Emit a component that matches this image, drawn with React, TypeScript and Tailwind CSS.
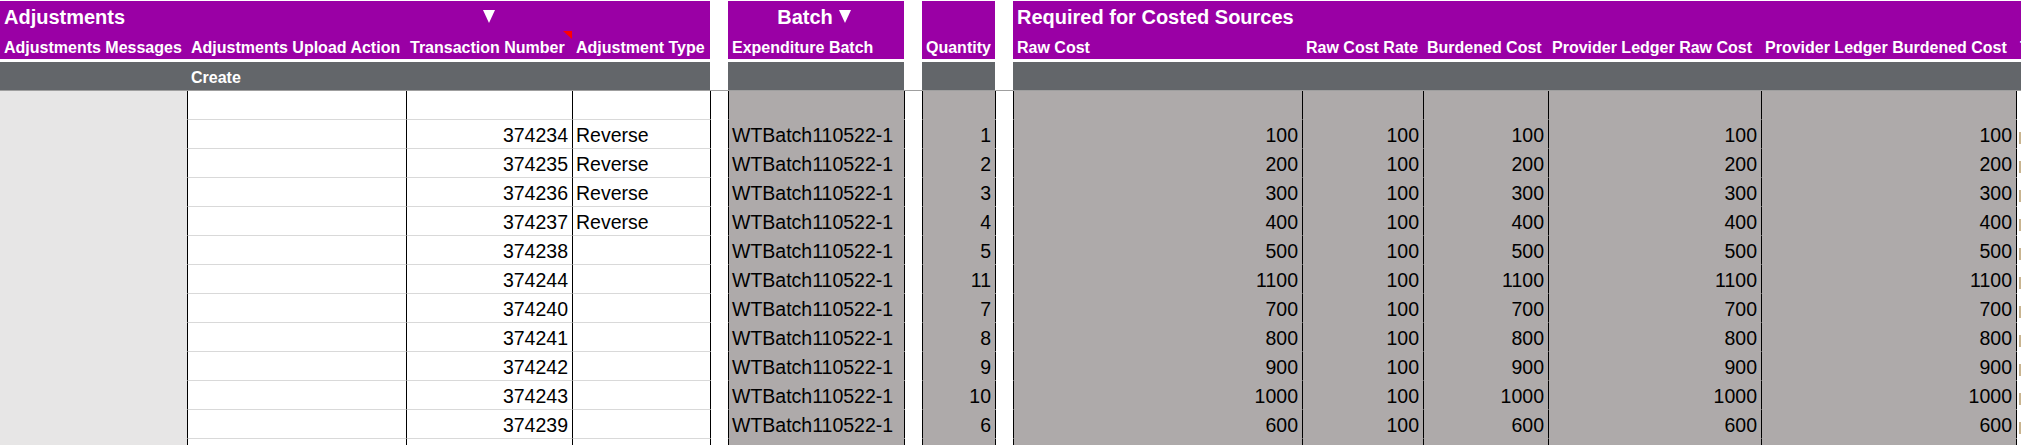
import React from "react";

const GRID =
  "grid grid-cols-[187px_219px_166px_138px_18px_176px_18px_73px_18px_289px_121px_125px_213px_255px_minmax(0,1fr)]";

const PURPLE = "bg-[#9a00a5]";
const BAR = "bg-[#63666a]";
const CELLGRAY = "bg-[#aeaaaa]";

type Row = { tx: string; type: string; qty: string; cost: string };

const rows: Row[] = [
  { tx: "374234", type: "Reverse", qty: "1", cost: "100" },
  { tx: "374235", type: "Reverse", qty: "2", cost: "200" },
  { tx: "374236", type: "Reverse", qty: "3", cost: "300" },
  { tx: "374237", type: "Reverse", qty: "4", cost: "400" },
  { tx: "374238", type: "", qty: "5", cost: "500" },
  { tx: "374244", type: "", qty: "11", cost: "1100" },
  { tx: "374240", type: "", qty: "7", cost: "700" },
  { tx: "374241", type: "", qty: "8", cost: "800" },
  { tx: "374242", type: "", qty: "9", cost: "900" },
  { tx: "374243", type: "", qty: "10", cost: "1000" },
  { tx: "374239", type: "", qty: "6", cost: "600" },
];

function Tri({ className = "" }: { className?: string }) {
  return (
    <svg width="12" height="13" viewBox="0 0 12 13" className={className}>
      <polygon points="0,0 12,0 6,13" fill="#ffffff" />
    </svg>
  );
}

const h2 =
  "h-[28px] flex items-end pb-[2px] pl-[4px] leading-[18px] text-[16px] font-bold text-white whitespace-nowrap overflow-hidden";

const dataBase =
  "h-[29px] flex items-end pb-[3px] leading-[20px] text-[19.5px] text-black whitespace-nowrap overflow-hidden border-b";

function DataRow({ r }: { r?: Row }) {
  return (
    <>
      <div className="h-[29px] bg-[#e7e6e6]" />
      <div className={`${dataBase} bg-white border-l border-l-black border-b-[#d9d9d9]`} />
      <div className={`${dataBase} bg-white border-l border-l-black border-b-[#d9d9d9] justify-end pr-[4px]`}>
        {r?.tx}
      </div>
      <div className={`${dataBase} bg-white border-l border-l-black border-b-[#d9d9d9] pl-[3px]`}>
        {r?.type}
      </div>
      <div className={`${dataBase} bg-white border-l border-l-black border-b-white`} />
      <div className={`${dataBase} ${CELLGRAY} border-l border-l-black border-b-[#aeaaaa] pl-[3px]`}>
        {r ? "WTBatch110522-1" : ""}
      </div>
      <div className={`${dataBase} bg-white border-l border-l-black border-b-white`} />
      <div className={`${dataBase} ${CELLGRAY} border-l border-l-black border-b-[#aeaaaa] justify-end pr-[4px]`}>
        {r?.qty}
      </div>
      <div className={`${dataBase} bg-white border-l border-l-black border-b-white`} />
      <div className={`${dataBase} ${CELLGRAY} border-l border-l-black border-b-[#aeaaaa] justify-end pr-[4px]`}>
        {r?.cost}
      </div>
      <div className={`${dataBase} ${CELLGRAY} border-l border-l-black border-b-[#aeaaaa] justify-end pr-[4px]`}>
        {r ? "100" : ""}
      </div>
      <div className={`${dataBase} ${CELLGRAY} border-l border-l-black border-b-[#aeaaaa] justify-end pr-[4px]`}>
        {r?.cost}
      </div>
      <div className={`${dataBase} ${CELLGRAY} border-l border-l-black border-b-[#aeaaaa] justify-end pr-[4px]`}>
        {r?.cost}
      </div>
      <div className={`${dataBase} ${CELLGRAY} border-l border-l-black border-b-[#aeaaaa] justify-end pr-[4px]`}>
        {r?.cost}
      </div>
      <div className={`${dataBase} bg-white border-l border-l-black border-b-white items-end pl-[2px]`}>
        {r ? <span className="block w-[2px] h-[12px] mb-[1px] bg-[#c9b48f]" /> : null}
      </div>
    </>
  );
}

export default function App() {
  return (
    <div className="w-full h-[445px] overflow-hidden bg-white pt-[1px] font-['Liberation_Sans',Arial,sans-serif]">
      <div className={GRID}>
        {/* Header row 1 */}
        <div className={`${PURPLE} h-[30px] pl-[4px] pt-[6px] leading-[20px] text-[20px] font-bold text-white whitespace-nowrap`}>
          Adjustments
        </div>
        <div className={`${PURPLE} h-[30px]`} />
        <div className={`${PURPLE} h-[30px] flex justify-center pt-[9px]`}>
          <Tri />
        </div>
        <div className={`${PURPLE} h-[30px]`} />
        <div className="h-[30px] bg-white" />
        <div className={`${PURPLE} h-[30px] flex justify-center items-start gap-[6px] pt-[6px] pr-[4px] leading-[20px] text-[20px] font-bold text-white`}>
          <span>Batch</span>
          <Tri className="mt-[3px]" />
        </div>
        <div className="h-[30px] bg-white" />
        <div className={`${PURPLE} h-[30px]`} />
        <div className="h-[30px] bg-white" />
        <div className={`${PURPLE} col-span-6 h-[30px] pl-[4px] pt-[6px] leading-[20px] text-[20px] font-bold text-white whitespace-nowrap`}>
          Required for Costed Sources
        </div>

        {/* Header row 2 */}
        <div className={`${PURPLE} ${h2}`}>Adjustments Messages</div>
        <div className={`${PURPLE} ${h2}`}>Adjustments Upload Action</div>
        <div className={`${PURPLE} ${h2} relative overflow-visible`}>
          Transaction Number
          <span className="absolute right-0 top-0 w-0 h-0 border-t-[8px] border-t-[#ff0000] border-l-[9px] border-l-transparent" />
        </div>
        <div className={`${PURPLE} ${h2}`}>Adjustment Type</div>
        <div className="h-[28px] bg-white" />
        <div className={`${PURPLE} ${h2}`}>Expenditure Batch</div>
        <div className="h-[28px] bg-white" />
        <div className={`${PURPLE} ${h2}`}>Quantity</div>
        <div className="h-[28px] bg-white" />
        <div className={`${PURPLE} ${h2}`}>Raw Cost</div>
        <div className={`${PURPLE} ${h2}`}>Raw Cost Rate</div>
        <div className={`${PURPLE} ${h2}`}>Burdened Cost</div>
        <div className={`${PURPLE} ${h2}`}>Provider Ledger Raw Cost</div>
        <div className={`${PURPLE} ${h2}`}>Provider Ledger Burdened Cost</div>
        <div className={`${PURPLE} ${h2} pl-[3px]`}>Total</div>

        {/* spacer */}
        <div className="col-span-full h-[3px] bg-white" />

        {/* Gray bar */}
        <div className={`${BAR} h-[28px]`} />
        <div className={`${BAR} h-[28px] flex items-end pb-[3px] pl-[4px] leading-[18px] text-[16px] font-bold text-white`}>
          Create
        </div>
        <div className={`${BAR} h-[28px]`} />
        <div className={`${BAR} h-[28px]`} />
        <div className="h-[28px] bg-white" />
        <div className={`${BAR} h-[28px]`} />
        <div className="h-[28px] bg-white" />
        <div className={`${BAR} h-[28px]`} />
        <div className="h-[28px] bg-white" />
        <div className={`${BAR} col-span-6 h-[28px]`} />

        <div className="col-span-full h-px bg-[#9f9f9f]" />

        {/* Data */}
        <DataRow />
        {rows.map((r) => (
          <DataRow key={r.tx} r={r} />
        ))}
        <DataRow />
      </div>
    </div>
  );
}
